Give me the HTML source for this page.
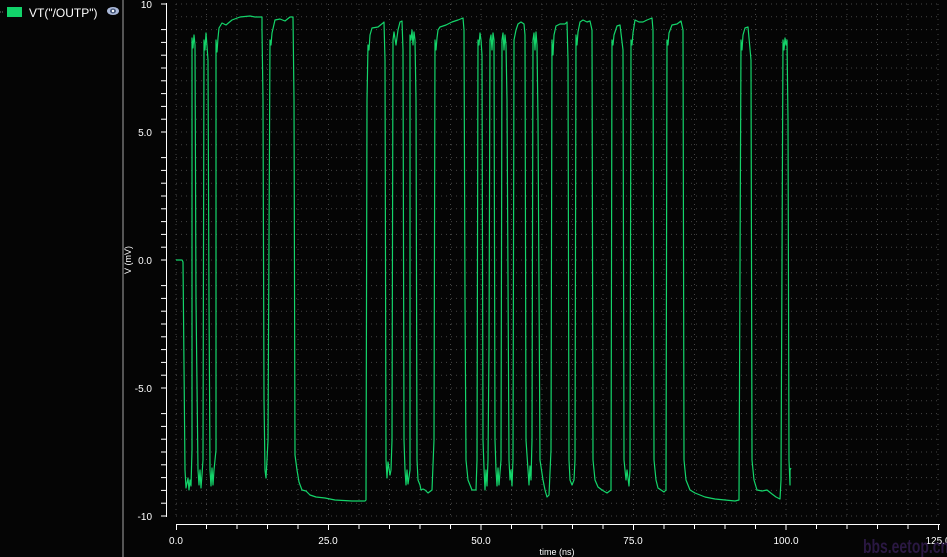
<!DOCTYPE html>
<html><head><meta charset="utf-8"><style>
html,body{margin:0;padding:0;background:#050505;}
body{width:947px;height:557px;overflow:hidden;position:relative;font-family:"Liberation Sans",sans-serif;}
</style></head><body>
<svg width="947" height="557" viewBox="0 0 947 557" xmlns="http://www.w3.org/2000/svg" style="position:absolute;left:0;top:0">
<rect width="947" height="557" fill="#050505"/>
<line x1="0" y1="12" x2="3" y2="12" stroke="#777" stroke-dasharray="1,1"/>
<rect x="7" y="7" width="15" height="10" fill="#12d36a"/>
<text x="29" y="17" fill="#fff" font-size="12" font-family="Liberation Sans, sans-serif">VT("/OUTP")</text>
<ellipse cx="113" cy="11" rx="6" ry="4" fill="#aab8d8"/>
<ellipse cx="113" cy="11" rx="3" ry="2.5" fill="#445577"/>
<circle cx="113" cy="11" r="1.2" fill="#fff"/>
<rect x="122" y="0" width="2" height="557" fill="#555"/>
<g stroke="#444" stroke-width="1" stroke-dasharray="1,4">
<line x1="176" y1="4" x2="940" y2="4"/><line x1="176" y1="16.8" x2="940" y2="16.8"/><line x1="176" y1="29.6" x2="940" y2="29.6"/><line x1="176" y1="42.4" x2="940" y2="42.4"/><line x1="176" y1="55.2" x2="940" y2="55.2"/><line x1="176" y1="68" x2="940" y2="68"/><line x1="176" y1="80.8" x2="940" y2="80.8"/><line x1="176" y1="93.6" x2="940" y2="93.6"/><line x1="176" y1="106.4" x2="940" y2="106.4"/><line x1="176" y1="119.2" x2="940" y2="119.2"/><line x1="176" y1="132" x2="940" y2="132"/><line x1="176" y1="144.8" x2="940" y2="144.8"/><line x1="176" y1="157.6" x2="940" y2="157.6"/><line x1="176" y1="170.4" x2="940" y2="170.4"/><line x1="176" y1="183.2" x2="940" y2="183.2"/><line x1="176" y1="196" x2="940" y2="196"/><line x1="176" y1="208.8" x2="940" y2="208.8"/><line x1="176" y1="221.6" x2="940" y2="221.6"/><line x1="176" y1="234.4" x2="940" y2="234.4"/><line x1="176" y1="247.2" x2="940" y2="247.2"/><line x1="176" y1="260" x2="940" y2="260"/><line x1="176" y1="272.8" x2="940" y2="272.8"/><line x1="176" y1="285.6" x2="940" y2="285.6"/><line x1="176" y1="298.4" x2="940" y2="298.4"/><line x1="176" y1="311.2" x2="940" y2="311.2"/><line x1="176" y1="324" x2="940" y2="324"/><line x1="176" y1="336.8" x2="940" y2="336.8"/><line x1="176" y1="349.6" x2="940" y2="349.6"/><line x1="176" y1="362.4" x2="940" y2="362.4"/><line x1="176" y1="375.2" x2="940" y2="375.2"/><line x1="176" y1="388" x2="940" y2="388"/><line x1="176" y1="400.8" x2="940" y2="400.8"/><line x1="176" y1="413.6" x2="940" y2="413.6"/><line x1="176" y1="426.4" x2="940" y2="426.4"/><line x1="176" y1="439.2" x2="940" y2="439.2"/><line x1="176" y1="452" x2="940" y2="452"/><line x1="176" y1="464.8" x2="940" y2="464.8"/><line x1="176" y1="477.6" x2="940" y2="477.6"/><line x1="176" y1="490.4" x2="940" y2="490.4"/><line x1="176" y1="503.2" x2="940" y2="503.2"/><line x1="176" y1="516" x2="940" y2="516"/>
<line x1="176" y1="4" x2="176" y2="516"/><line x1="206.5" y1="4" x2="206.5" y2="516"/><line x1="237" y1="4" x2="237" y2="516"/><line x1="267.5" y1="4" x2="267.5" y2="516"/><line x1="298" y1="4" x2="298" y2="516"/><line x1="328.5" y1="4" x2="328.5" y2="516"/><line x1="359" y1="4" x2="359" y2="516"/><line x1="389.5" y1="4" x2="389.5" y2="516"/><line x1="420" y1="4" x2="420" y2="516"/><line x1="450.5" y1="4" x2="450.5" y2="516"/><line x1="481" y1="4" x2="481" y2="516"/><line x1="511.5" y1="4" x2="511.5" y2="516"/><line x1="542" y1="4" x2="542" y2="516"/><line x1="572.5" y1="4" x2="572.5" y2="516"/><line x1="603" y1="4" x2="603" y2="516"/><line x1="633.5" y1="4" x2="633.5" y2="516"/><line x1="664" y1="4" x2="664" y2="516"/><line x1="694.5" y1="4" x2="694.5" y2="516"/><line x1="725" y1="4" x2="725" y2="516"/><line x1="755.5" y1="4" x2="755.5" y2="516"/><line x1="786" y1="4" x2="786" y2="516"/><line x1="816.5" y1="4" x2="816.5" y2="516"/><line x1="847" y1="4" x2="847" y2="516"/><line x1="877.5" y1="4" x2="877.5" y2="516"/><line x1="908" y1="4" x2="908" y2="516"/><line x1="938" y1="4" x2="938" y2="516"/>
</g>
<g stroke="#fff" stroke-width="1">
<line x1="166.5" y1="3" x2="166.5" y2="517"/>
<line x1="161" y1="4" x2="166" y2="4"/><line x1="161" y1="29.6" x2="166" y2="29.6"/><line x1="161" y1="42.4" x2="166" y2="42.4"/><line x1="161" y1="55.2" x2="166" y2="55.2"/><line x1="161" y1="68" x2="166" y2="68"/><line x1="161" y1="80.8" x2="166" y2="80.8"/><line x1="161" y1="93.6" x2="166" y2="93.6"/><line x1="161" y1="106.4" x2="166" y2="106.4"/><line x1="161" y1="119.2" x2="166" y2="119.2"/><line x1="161" y1="132" x2="166" y2="132"/><line x1="161" y1="157.6" x2="166" y2="157.6"/><line x1="161" y1="170.4" x2="166" y2="170.4"/><line x1="161" y1="183.2" x2="166" y2="183.2"/><line x1="161" y1="196" x2="166" y2="196"/><line x1="161" y1="208.8" x2="166" y2="208.8"/><line x1="161" y1="221.6" x2="166" y2="221.6"/><line x1="161" y1="234.4" x2="166" y2="234.4"/><line x1="161" y1="247.2" x2="166" y2="247.2"/><line x1="161" y1="260" x2="166" y2="260"/><line x1="161" y1="285.6" x2="166" y2="285.6"/><line x1="161" y1="298.4" x2="166" y2="298.4"/><line x1="161" y1="311.2" x2="166" y2="311.2"/><line x1="161" y1="324" x2="166" y2="324"/><line x1="161" y1="336.8" x2="166" y2="336.8"/><line x1="161" y1="349.6" x2="166" y2="349.6"/><line x1="161" y1="362.4" x2="166" y2="362.4"/><line x1="161" y1="375.2" x2="166" y2="375.2"/><line x1="161" y1="388" x2="166" y2="388"/><line x1="161" y1="413.6" x2="166" y2="413.6"/><line x1="161" y1="426.4" x2="166" y2="426.4"/><line x1="161" y1="439.2" x2="166" y2="439.2"/><line x1="161" y1="452" x2="166" y2="452"/><line x1="161" y1="464.8" x2="166" y2="464.8"/><line x1="161" y1="477.6" x2="166" y2="477.6"/><line x1="161" y1="490.4" x2="166" y2="490.4"/><line x1="161" y1="503.2" x2="166" y2="503.2"/><line x1="161" y1="516" x2="166" y2="516"/>
<line x1="176" y1="524.5" x2="940" y2="524.5"/>
<line x1="176.5" y1="524" x2="176.5" y2="530"/><line x1="206.5" y1="524" x2="206.5" y2="529"/><line x1="237" y1="524" x2="237" y2="529"/><line x1="267.5" y1="524" x2="267.5" y2="529"/><line x1="298" y1="524" x2="298" y2="529"/><line x1="328.5" y1="524" x2="328.5" y2="530"/><line x1="359" y1="524" x2="359" y2="529"/><line x1="389.5" y1="524" x2="389.5" y2="529"/><line x1="420" y1="524" x2="420" y2="529"/><line x1="450.5" y1="524" x2="450.5" y2="529"/><line x1="481" y1="524" x2="481" y2="530"/><line x1="511.5" y1="524" x2="511.5" y2="529"/><line x1="542" y1="524" x2="542" y2="529"/><line x1="572.5" y1="524" x2="572.5" y2="529"/><line x1="603" y1="524" x2="603" y2="529"/><line x1="633.5" y1="524" x2="633.5" y2="530"/><line x1="664" y1="524" x2="664" y2="529"/><line x1="694.5" y1="524" x2="694.5" y2="529"/><line x1="725" y1="524" x2="725" y2="529"/><line x1="755.5" y1="524" x2="755.5" y2="529"/><line x1="786" y1="524" x2="786" y2="530"/><line x1="816.5" y1="524" x2="816.5" y2="529"/><line x1="847" y1="524" x2="847" y2="529"/><line x1="877.5" y1="524" x2="877.5" y2="529"/><line x1="908" y1="524" x2="908" y2="529"/><line x1="938.5" y1="524" x2="938.5" y2="530"/>
</g>
<g fill="#fff" font-size="10" font-family="Liberation Sans, sans-serif">
<text x="152" y="8" text-anchor="end">10</text>
<text x="152" y="136" text-anchor="end">5.0</text>
<text x="152" y="264" text-anchor="end">0.0</text>
<text x="152" y="392" text-anchor="end">-5.0</text>
<text x="152" y="520" text-anchor="end">-10</text>
<text x="176" y="544" text-anchor="middle">0.0</text>
<text x="328" y="544" text-anchor="middle">25.0</text>
<text x="481" y="544" text-anchor="middle">50.0</text>
<text x="633" y="544" text-anchor="middle">75.0</text>
<text x="786" y="544" text-anchor="middle">100.0</text>
<text x="938" y="544" text-anchor="middle">125.0</text>
<text x="557" y="555" text-anchor="middle" font-size="9">time (ns)</text>
<text transform="translate(131,260) rotate(-90)" text-anchor="middle" font-size="9">V (mV)</text>
</g>
<text x="863" y="553" fill="#2a1842" font-size="19" font-weight="bold" textLength="86" lengthAdjust="spacingAndGlyphs" font-family="Liberation Sans, sans-serif">bbs.eetop.cn</text>
<polyline fill="none" stroke="#14d46a" stroke-width="1.2" stroke-linejoin="round" points="176,260 182,260 183,262 185,470 186,488 188,478 189,490 190,480 191,486 192,450 192,38 193,48 194,35 195,45 196,300 198,470 199,485 200,470 201,488 202,475 203,460 204,40 205,50 206,33 207,46 208,60 209,300 210,470 211,486 212,468 213,485 214,470 216,450 216,40 217,52 218,38 219,28 222,23 226,25 232,20 240,17 250,16 255,17 262,17 262,30 263,100 264,400 265,470 266,478 267,460 268,440 270,40 271,45 272,33 275,20 280,19 285,21 290,17 293,17 294,100 295,455 297,470 299,482 302,490 306,491 310,495 316,497 325,498 335,500 352,501 365,501 366,500 367,100 368,45 369,50 370,35 372,28 378,27 383,23 384,22 385,60 386,460 387,478 388,462 390,475 391,470 392,440 393,40 394,32 396,45 398,30 400,22 402,21 403,50 404,440 405,470 406,485 407,470 408,484 410,470 410,35 411,40 412,30 413,45 414,32 415,40 416,100 417,460 418,480 420,485 421,490 423,489 425,490 428,493 432,490 434,440 435,40 436,50 437,38 438,30 440,27 446,25 452,22 458,20 463,18 464,30 465,300 466,460 467,470 468,480 470,485 472,490 476,490 477,460 478,40 479,45 480,33 481,40 482,55 483,440 484,468 485,490 486,470 487,486 488,460 489,350 490,40 491,35 492,50 493,33 494,40 495,440 496,470 497,486 498,468 499,485 501,460 502,40 503,33 504,50 505,35 506,45 507,100 509,460 510,480 511,470 512,486 513,460 514,40 515,35 516,30 518,24 521,22 524,24 525,35 526,440 528,470 529,485 530,466 531,480 532,440 533,40 534,33 535,50 536,32 537,45 538,120 540,460 543,480 545,490 547,497 549,495 551,450 552,40 553,55 554,35 556,26 560,24 565,24 567,22 568,60 569,460 570,480 572,485 574,480 575,460 576,35 577,45 578,32 580,22 583,20 587,22 590,21 592,30 593,460 595,480 598,487 602,490 607,493 611,490 612,40 613,45 614,35 617,26 620,25 623,50 624,460 626,480 627,470 629,486 630,470 631,40 632,45 633,33 635,20 639,22 643,22 647,20 652,18 653,30 654,460 656,480 658,488 661,490 664,492 666,490 667,40 668,45 669,33 672,25 677,24 681,21 683,30 684,460 686,480 690,490 695,493 705,497 715,499 725,500 735,501 739,500 741,40 742,50 743,35 745,28 748,27 751,60 752,460 754,480 757,490 762,491 767,490 772,494 776,497 780,499 781,480 783,40 784,50 785,38 786,45 787,40 788,120 789,460 790,485 790,470 791,468"/>
</svg>
</body></html>
